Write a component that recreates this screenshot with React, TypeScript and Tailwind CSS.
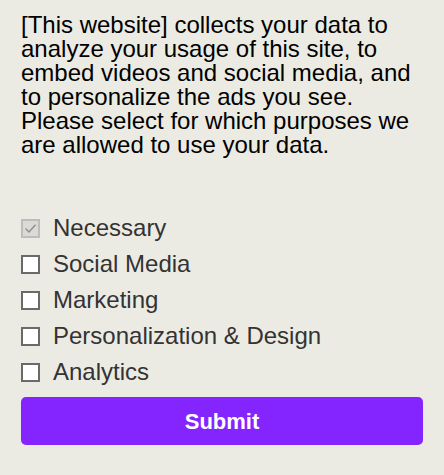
const purposes = [
  { label: "Necessary", checked: true, disabled: true },
  { label: "Social Media" },
  { label: "Marketing" },
  { label: "Personalization & Design" },
  { label: "Analytics" },
];

const Box = ({ disabled }: { checked?: boolean; disabled?: boolean }) => {
  if (disabled) {
    return (
      <span className="flex h-[19px] w-[19px] shrink-0 items-center justify-center border-2 border-[#bdbdbb] bg-[#dadad7]">
        <svg width="15" height="15" viewBox="0 0 15 15" fill="none">
          <path d="M2.5 7.5 L6 11 L12.5 3.8" stroke="#8c8c8c" strokeWidth="1.3" />
        </svg>
      </span>
    );
  }
  return <span className="h-[19px] w-[19px] shrink-0 border-2 border-[#6a6a6a] bg-white" />;
};

export default function App() {
  return (
    <div className="min-h-[475px] w-[444px] bg-[#ecebe3] px-[21px] pt-[13px] font-['Liberation_Sans',Arial,sans-serif]">
      <p className="text-[24px] leading-[24px] text-black">
        [This website] collects your data to analyze your usage of this site, to embed videos and social media, and to
        personalize the ads you see. Please select for which purposes we are allowed to use your data.
      </p>
      <ul className="mt-[53px] flex flex-col">
        {purposes.map((p) => (
          <li key={p.label} className="flex h-[36px] items-center gap-[13px]">
            <Box checked={p.checked} disabled={p.disabled} />
            <span className="text-[24px] leading-none text-[#333]">{p.label}</span>
          </li>
        ))}
      </ul>
      <button className="mt-[7px] flex h-[48px] w-full items-center justify-center rounded-[5px] bg-[#8425ff] text-[22px] font-bold text-white">
        Submit
      </button>
    </div>
  );
}
